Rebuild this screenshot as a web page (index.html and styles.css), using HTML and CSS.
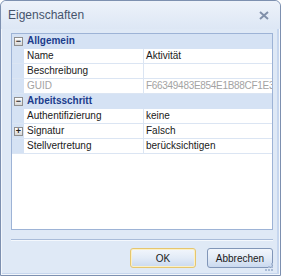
FILE: index.html
```html
<!DOCTYPE html>
<html lang="de">
<head>
    <meta charset="UTF-8">
    <title>Eigenschaften</title>
    <link rel="stylesheet" href="styles.css">
</head>
<body>
    <div class="window">
        <div class="titlebar">
            <span class="title">Eigenschaften</span>
            <svg class="close" width="10" height="9" viewBox="0 0 10 9">
                <path d="M1 1 L9 8 M9 1 L1 8" stroke="#8190aa" stroke-width="2"/>
            </svg>
        </div>
        <div class="content">
            <div class="grid">
                <div class="row category">
                    <div class="margin"><span class="toggle">&minus;</span></div>
                    <div class="cat-name">Allgemein</div>
                </div>
                <div class="row">
                    <div class="margin"></div>
                    <div class="name">Name</div>
                    <div class="value">Aktivität</div>
                </div>
                <div class="row">
                    <div class="margin"></div>
                    <div class="name">Beschreibung</div>
                    <div class="value"></div>
                </div>
                <div class="row readonly">
                    <div class="margin"></div>
                    <div class="name">GUID</div>
                    <div class="value guid">F66349483E854E1B88CF1E3E</div>
                </div>
                <div class="row category">
                    <div class="margin"><span class="toggle">&minus;</span></div>
                    <div class="cat-name">Arbeitsschritt</div>
                </div>
                <div class="row">
                    <div class="margin"></div>
                    <div class="name">Authentifizierung</div>
                    <div class="value">keine</div>
                </div>
                <div class="row">
                    <div class="margin"><span class="toggle">+</span></div>
                    <div class="name">Signatur</div>
                    <div class="value">Falsch</div>
                </div>
                <div class="row">
                    <div class="margin"></div>
                    <div class="name">Stellvertretung</div>
                    <div class="value">berücksichtigen</div>
                </div>
            </div>
            <div class="separator"></div>
            <div class="buttons">
                <button class="btn default">OK</button>
                <button class="btn">Abbrechen</button>
            </div>
        </div>
        <svg class="grip" width="9" height="9" viewBox="0 0 9 9">
            <rect x="6" y="0" width="2" height="2" fill="#a9bbd6"/>
            <rect x="3" y="3" width="2" height="2" fill="#a9bbd6"/>
            <rect x="6" y="3" width="2" height="2" fill="#a9bbd6"/>
            <rect x="0" y="6" width="2" height="2" fill="#a9bbd6"/>
            <rect x="3" y="6" width="2" height="2" fill="#a9bbd6"/>
            <rect x="6" y="6" width="2" height="2" fill="#a9bbd6"/>
        </svg>
    </div>
</body>
</html>
```

FILE: styles.css
```css
:root {
    --frame-color: #7d90b0;
    --body-bg: #dfe9f6;
    --category-bg: #d5e2f4;
    --line-color: #dbe5f3;
    --grid-border: #9db3d6;
    --text-color: #1a1a1a;
}

body {
    margin: 0;
    font-family: "Liberation Sans", sans-serif;
    font-size: 10px;
    color: var(--text-color);
}

.window {
    position: relative;
    width: 281px;
    height: 276px;
    box-sizing: border-box;
    border: 1px solid var(--frame-color);
    border-radius: 6px 6px 0 0;
    background-color: var(--body-bg);
    box-shadow: inset 0 0 0 1px #f3f7fc, inset -3px -2px 0 0 #c6d6ee;
    overflow: hidden;
}

.titlebar {
    display: flex;
    align-items: center;
    justify-content: space-between;
    height: 28px;
    padding: 0 11px 0 7px;
    background: linear-gradient(#edf2fa, #dde7f5);
    border-radius: 5px 5px 0 0;
}

.title {
    font-size: 12px;
    color: #46546c;
}

.close {
    margin-top: 1px;
}

.content {
    padding: 4px 7px 0 10px;
}

.grid {
    height: 197px;
    box-sizing: border-box;
    border: 1px solid var(--grid-border);
    background-color: white;
    overflow: hidden;
}

.row {
    display: flex;
    height: 15px;
    box-sizing: border-box;
    border-bottom: 1px solid var(--line-color);
    line-height: 14px;
    white-space: nowrap;
}

.margin {
    display: flex;
    align-items: center;
    justify-content: center;
    width: 12px;
    flex-shrink: 0;
    background-color: var(--category-bg);
}

.toggle {
    display: flex;
    align-items: center;
    justify-content: center;
    width: 7px;
    height: 7px;
    margin-left: 1px;
    border: 1px solid #8f8f8f;
    background: linear-gradient(#ffffff, #d6d6d6);
    font-size: 9px;
    font-weight: bold;
    line-height: 7px;
    color: #222;
}

.name {
    width: 116px;
    flex-shrink: 0;
    padding-left: 3px;
    border-right: 1px solid var(--line-color);
    overflow: hidden;
}

.value {
    flex: 1;
    padding-left: 2px;
    overflow: hidden;
}

.guid {
    letter-spacing: -0.3px;
}

.category {
    background-color: var(--category-bg);
    border-bottom-color: var(--category-bg);
}

.cat-name {
    padding-left: 3px;
    font-weight: bold;
    color: #1b3c8c;
}

.readonly .name,
.readonly .value {
    color: #a3a3a3;
}

.separator {
    height: 1px;
    margin-top: 9px;
    background-color: #a9bcd9;
    border-bottom: 1px solid #f4f8fd;
}

.buttons {
    display: flex;
    justify-content: flex-end;
    gap: 11px;
    margin-top: 7px;
}

.btn {
    width: 66px;
    height: 20px;
    padding: 0;
    border: 1px solid #8196b8;
    border-radius: 3px;
    background: linear-gradient(#f2f6fc 0%, #e2ebf7 50%, #cad9ef 100%);
    font-family: "Liberation Sans", sans-serif;
    font-size: 10px;
    color: #1a1a1a;
}

.btn.default {
    border-color: #e5c66f;
    box-shadow: inset 0 0 0 1px #fbf0c6;
}

.grip {
    position: absolute;
    right: 6px;
    bottom: 3px;
}
```
